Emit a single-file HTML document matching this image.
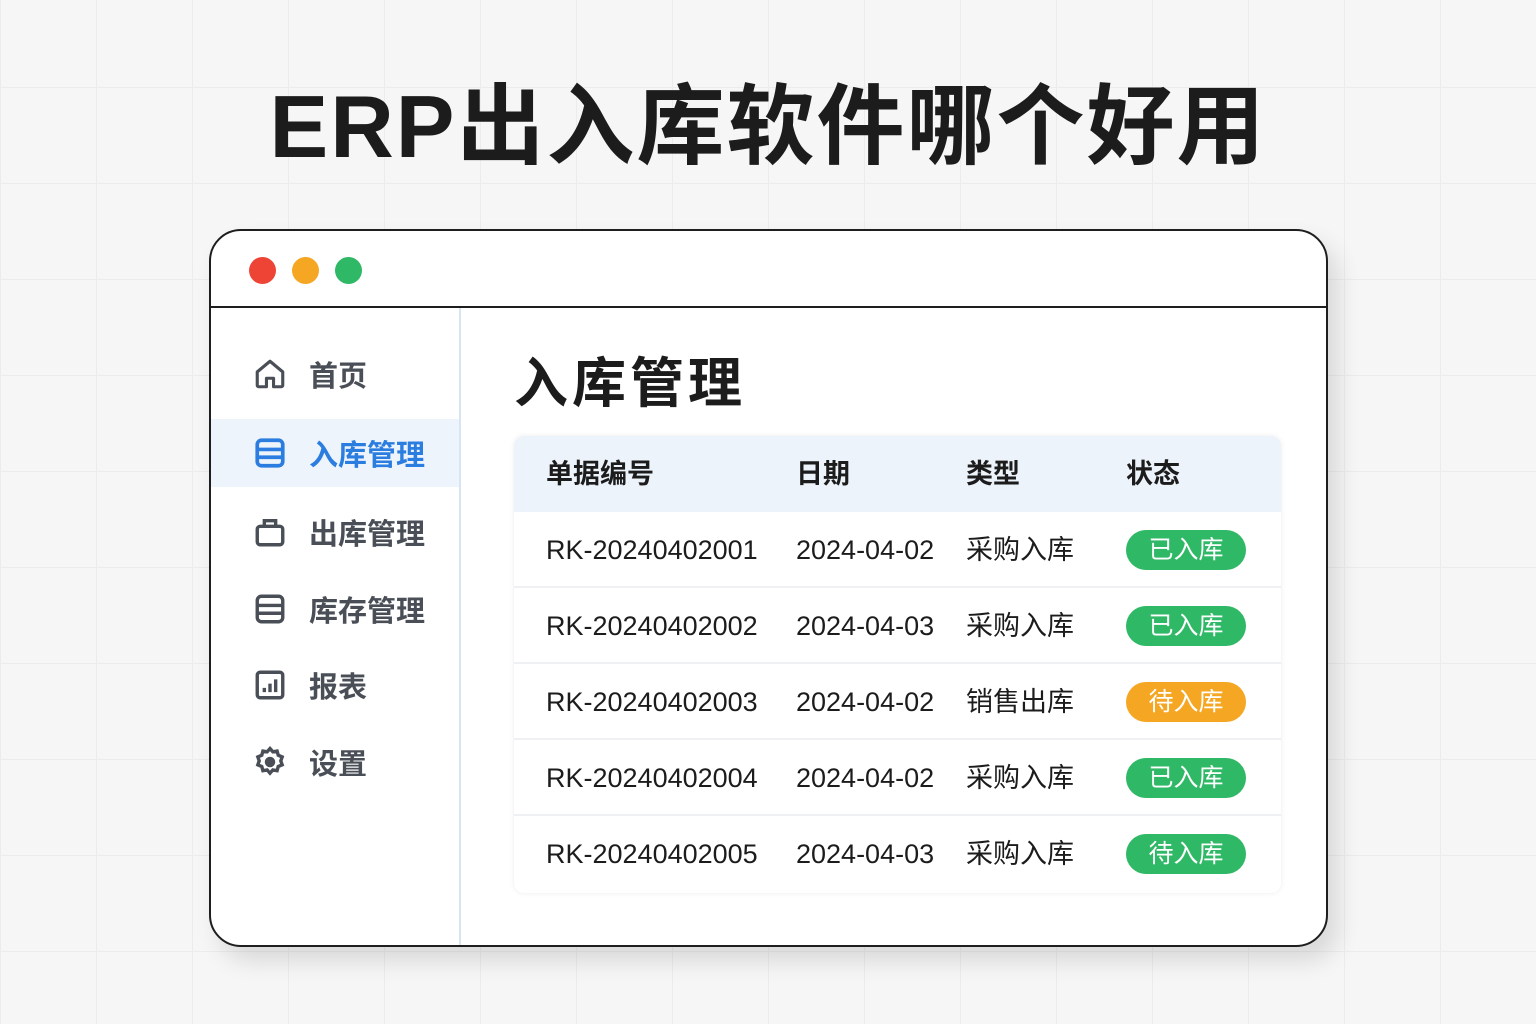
<!DOCTYPE html>
<html><head><meta charset="utf-8"><style>
*{margin:0;padding:0;box-sizing:border-box}
body{width:1536px;height:1024px;background:#f6f6f6;position:relative;overflow:hidden;font-family:"Liberation Sans","Noto Sans CJK SC",sans-serif;
background-image:linear-gradient(#ececec 1px,transparent 1px),linear-gradient(90deg,#ececec 1px,transparent 1px);background-size:96px 96px;background-position:0 87px}
.title{position:absolute;left:0;width:1536px;top:72px;text-align:center;font-size:88px;font-weight:700;color:#1c1c1c;letter-spacing:2px;line-height:110px}
.win{position:absolute;left:209px;top:229px;width:1119px;height:718px;background:#fff;border:2.5px solid #1e1e1e;border-radius:32px;overflow:hidden;box-shadow:10px 14px 24px rgba(0,0,0,.12)}
.bar{height:77px;border-bottom:2px solid #1e1e1e;position:relative}
.dot{position:absolute;top:26px;width:27px;height:27px;border-radius:50%}
.side{position:absolute;left:0;top:77px;width:250px;bottom:0;border-right:2px solid #d6e4f3}
.item{position:absolute;left:0;width:248px;height:68px;display:flex;align-items:center;padding-left:42px;font-size:29px;font-weight:700;color:#4a4f57}
.item svg{width:34px;height:34px;margin-right:22px}
.item.act{background:#eef4fb;color:#2b7de0}
h1{position:absolute;left:303px;top:108px;font-size:54px;font-weight:700;color:#1c1c1c;letter-spacing:4px}
.tbl{position:absolute;left:303px;top:205px;width:767px;height:457px;border-radius:10px;box-shadow:0 0 6px rgba(0,0,0,.08);overflow:hidden;background:#fff}
.row{position:absolute;left:0;width:767px;height:76px;border-bottom:2px solid #eef0f3;font-size:27px;color:#1c1c1c}
.row span{position:absolute;top:0;line-height:76px}
.hd{background:#edf3fa;font-weight:700;border:none}
.b{position:absolute;left:612px;width:120px;height:40px;border-radius:20px;color:#fff;font-size:25px;line-height:40px!important;text-align:center;top:18px!important}
.g{background:#2fb865}.o{background:#f5a623}
</style></head><body>
<div class="title">ERP出入库软件哪个好用</div>
<div class="win">
<div class="bar"><div class="dot" style="left:38px;background:#ee4436"></div><div class="dot" style="left:81px;background:#f5a623"></div><div class="dot" style="left:124px;background:#2fb865"></div></div>
<div class="side">
<div class="item" style="top:32px"><svg viewBox="0 0 24 24" fill="none" stroke="#4a4f57" stroke-width="2.2" stroke-linejoin="round"><path d="M3 10.5 12 3l9 7.5V20a1 1 0 0 1-1 1h-5.5v-6h-5v6H4a1 1 0 0 1-1-1z"/></svg>首页</div>
<div class="item act" style="top:111px"><svg viewBox="0 0 24 24" fill="none" stroke="#2b7de0" stroke-width="2.6"><rect x="3" y="3" width="18" height="18" rx="3"/><path d="M3 9.5h18M3 15h18"/></svg>入库管理</div>
<div class="item" style="top:190px"><svg viewBox="0 0 24 24" fill="none" stroke="#4a4f57" stroke-width="2.4"><rect x="3" y="8" width="18" height="13" rx="2"/><path d="M8 8V4h8v4"/></svg>出库管理</div>
<div class="item" style="top:267px"><svg viewBox="0 0 24 24" fill="none" stroke="#4a4f57" stroke-width="2.4"><rect x="3" y="3" width="18" height="18" rx="3"/><path d="M3 9.5h18M3 15h18"/></svg>库存管理</div>
<div class="item" style="top:343px"><svg viewBox="0 0 24 24" fill="none" stroke="#4a4f57" stroke-width="2.4"><rect x="3" y="3" width="18" height="18" rx="2"/><path d="M8 17v-3M12 17v-6M16 17V8"/></svg>报表</div>
<div class="item" style="top:420px"><svg viewBox="0 0 24 24" fill="none" stroke="#4a4f57" stroke-width="2.4"><path d="M12 2.5l2 2.3 3-.5.8 2.9 2.8 1.2-1 2.8 1 2.8-2.8 1.2-.8 2.9-3-.5-2 2.3-2-2.3-3 .5-.8-2.9-2.8-1.2 1-2.8-1-2.8 2.8-1.2.8-2.9 3 .5z"/><circle cx="12" cy="12" r="2.5" fill="#4a4f57"/></svg>设置</div>
</div>
<h1>入库管理</h1>
<div class="tbl">
<div class="row hd" style="top:0"><span style="left:32px">单据编号</span><span style="left:282px">日期</span><span style="left:452px">类型</span><span style="left:612px">状态</span></div>
<div class="row" style="top:76px"><span style="left:32px">RK-20240402001</span><span style="left:282px">2024-04-02</span><span style="left:452px">采购入库</span><span class="b g">已入库</span></div>
<div class="row" style="top:152px"><span style="left:32px">RK-20240402002</span><span style="left:282px">2024-04-03</span><span style="left:452px">采购入库</span><span class="b g">已入库</span></div>
<div class="row" style="top:228px"><span style="left:32px">RK-20240402003</span><span style="left:282px">2024-04-02</span><span style="left:452px">销售出库</span><span class="b o">待入库</span></div>
<div class="row" style="top:304px"><span style="left:32px">RK-20240402004</span><span style="left:282px">2024-04-02</span><span style="left:452px">采购入库</span><span class="b g">已入库</span></div>
<div class="row" style="top:380px;border:none"><span style="left:32px">RK-20240402005</span><span style="left:282px">2024-04-03</span><span style="left:452px">采购入库</span><span class="b g">待入库</span></div>
</div>
</div>
</body></html>
